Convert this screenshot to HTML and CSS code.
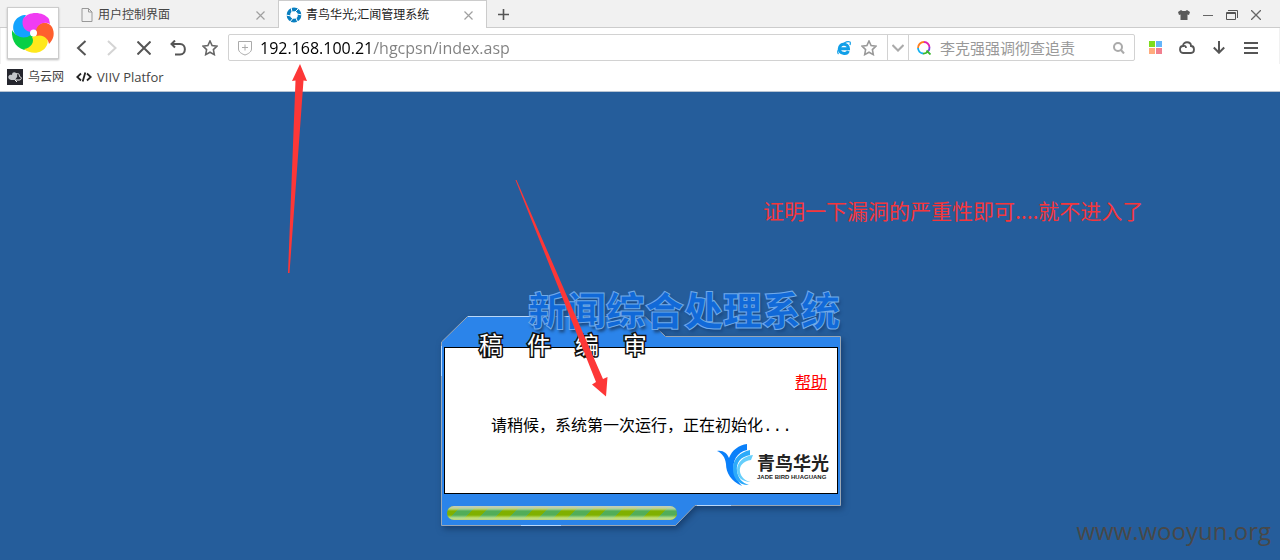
FILE: index.html
```html
<!DOCTYPE html>
<html lang="zh-CN">
<head>
<meta charset="utf-8">
<title>青鸟华光;汇闻管理系统</title>
<link rel="stylesheet" href="styles.css">
</head>
<body>
<header class="browser">
  <button class="brand" aria-label="浏览器菜单">
    <svg width="44" height="44" viewBox="0 0 44 44">
      <g transform="translate(0 1)">
        <path fill="#13a3ff" d="M3 20C0 11 6 3 15 3C11 9 13 16 20 18L20 25C12 29 6 27 3 20Z"/>
        <path fill="#08cf45" d="M1 18C5 25 13 28 20 23C27 27 24 37 16 38C7 38 0 30 1 18Z"/>
        <path fill="#ffe81c" d="M24 23C33 20 39 26 36 33C32 42 20 43 13 37C20 36 24 30 21 25Z"/>
        <path fill="#ff5f2e" d="M24 19C26 10 36 8 41 15C44 21 43 27 38 32C37 26 32 22 25 24Z"/>
        <path fill="#f03cf2" d="M12 7C17 -1 32 -1 38 7L39 12C33 9 26 12 25 19L21 20C14 20 10 14 12 7Z"/>
        <circle cx="22.500" cy="21" r="3.500" fill="#fff"/>
      </g>
    </svg>
  </button>
  <div class="tabbar">
    <div class="tab">
      <svg width="12" height="14" viewBox="0 0 12 14" fill="none" stroke="#999"><path d="M1 .5H7.500L11 4V13.500H1ZM7.500 .5V4H11"/></svg>
      <span class="tab-title">用户控制界面</span>
      <button class="tab-close" aria-label="关闭"><svg width="9" height="9" viewBox="0 0 9 9" stroke="#a0a0a0" stroke-width="1.200"><path d="M.5 .5L8.500 8.500M8.500 .5L.5 8.500"/></svg></button>
    </div>
    <div class="tab active">
      <svg width="16" height="16" viewBox="0 0 16 16" fill="none"><circle cx="8" cy="8" r="5.600" stroke="#0a7fc0" stroke-width="3.600"/><path stroke="#fff" stroke-width="1" d="M5 0L6 5M13 1L9 5M16 8L11 7M12 16L10 11M4 15L7 11M0 8L5 9"/></svg>
      <span class="tab-title">青鸟华光;汇闻管理系统</span>
      <button class="tab-close" aria-label="关闭"><svg width="9" height="9" viewBox="0 0 9 9" stroke="#a0a0a0" stroke-width="1.200"><path d="M.5 .5L8.500 8.500M8.500 .5L.5 8.500"/></svg></button>
    </div>
    <button class="new-tab" aria-label="新标签页"><svg width="11" height="11" viewBox="0 0 11 11" stroke="#555" stroke-width="1.600"><path d="M5.500 0V11M0 5.500H11"/></svg></button>
    <div class="window-controls">
      <button aria-label="皮肤"><svg width="12" height="10" viewBox="0 0 12 10" fill="#5a5a5a"><path d="M3 0L4.500 1H7.500L9 0L12 2L11 5L9.500 4.500V10H2.500V4.500L1 5L0 2Z"/></svg></button>
      <button aria-label="最小化"><svg width="10" height="10" viewBox="0 0 10 10" stroke="#666"><path d="M0 5.500H10"/></svg></button>
      <button aria-label="还原"><svg width="12" height="10" viewBox="0 0 12 10" fill="none" stroke="#555"><path d="M.5 2.500H9.500V9.500H.5ZM.5 3.500H9.500M2 .5H11.500V8"/></svg></button>
      <button aria-label="关闭窗口"><svg width="10" height="10" viewBox="0 0 10 10" stroke="#666" stroke-width="1.300"><path d="M0 0L10 10M10 0L0 10"/></svg></button>
    </div>
  </div>
  <div class="toolbar">
    <button class="nav narrow" aria-label="后退"><svg width="16" height="16" viewBox="0 0 16 16" fill="none" stroke="#555" stroke-width="2"><path d="M11.500 1L4 8L11.500 15"/></svg></button>
    <button class="nav narrow" aria-label="前进"><svg width="16" height="16" viewBox="0 0 16 16" fill="none" stroke="#d4d4d4" stroke-width="2"><path d="M4 1L11.500 8L4 15"/></svg></button>
    <button class="nav" aria-label="停止"><svg width="14" height="14" viewBox="0 0 14 14" stroke="#555" stroke-width="2"><path d="M.5 .5L13.500 13.500M13.500 .5L.5 13.500"/></svg></button>
    <button class="nav" aria-label="撤销"><svg width="16" height="16" viewBox="0 0 16 16" fill="none" stroke="#555" stroke-width="2"><path d="M5 .5L1.500 4L5 7.500M1.500 4H10C16.500 4 16.500 14.500 10 14.500H5"/></svg></button>
    <button class="nav narrow" aria-label="收藏"><svg width="16" height="16" viewBox="0 0 16 16" fill="none" stroke="#666" stroke-width="1.600"><path d="M8 1L10.100 5.600L15 6.200L11.400 9.600L12.300 14.600L8 12.200L3.700 14.600L4.600 9.600L1 6.200L5.900 5.600Z"/></svg></button>
    <div class="omnibox">
      <svg width="14" height="16" viewBox="0 0 14 16" fill="none" stroke="#aaa"><path d="M.5 1.500H13.500V9C13.500 12 10 14 7 15C4 14 .5 12 .5 9ZM7 4.500V10.500M4 7.500H10"/></svg>
      <input class="url" type="text" aria-label="地址栏" value="192.168.100.21/hgcpsn/index.asp">
      <button class="box-btn" aria-label="兼容模式"><svg width="14" height="14" viewBox="0 0 14 14" fill="none"><path stroke="#109fe8" stroke-width="3" d="M3.500 7.700H11.500C11.300 2 2.800 1.500 2.300 7.500C2.300 13.300 10 13.800 11.300 10"/><path stroke="#109fe8" stroke-width="1.200" d="M1.500 13C-1.500 10 7 -1 13 1C13.500 1.500 13.300 3 13 4"/></svg></button>
      <button class="box-btn" aria-label="收藏此页"><svg width="16" height="16" viewBox="0 0 16 16" fill="none" stroke="#999" stroke-width="1.600"><path d="M8 1L10.100 5.600L15 6.200L11.400 9.600L12.300 14.600L8 12.200L3.700 14.600L4.600 9.600L1 6.200L5.900 5.600Z"/></svg></button>
      <button class="drop" aria-label="展开"><svg width="12" height="8" viewBox="0 0 12 8" fill="none" stroke="#aaa" stroke-width="2"><path d="M.5 1L6 6.500L11.500 1"/></svg></button>
      <div class="search">
        <svg width="14" height="14" viewBox="0 0 14 14" fill="none" stroke-width="1.800"><path stroke="#e020b0" d="M7 1A6 6 0 0 1 12.500 6"/><path stroke="#8040e0" d="M12.500 6A6 6 0 0 1 11 10.500"/><path stroke="#38b830" d="M11 10.500A6 6 0 0 1 6 12.500M9.500 9.500L13.500 13.500"/><path stroke="#10b0f0" d="M6 12.500A6 6 0 0 1 1 7"/><path stroke="#ff8020" d="M1 7A6 6 0 0 1 7 1"/></svg>
        <input class="query" type="text" aria-label="搜索" placeholder="李克强强调彻查追责">
        <button class="find" aria-label="搜索"><svg width="12" height="12" viewBox="0 0 12 12" fill="none" stroke="#aaa" stroke-width="2"><circle cx="5" cy="5" r="4"/><path d="M8 8L11 11.500"/></svg></button>
      </div>
    </div>
    <div class="tools">
      <button aria-label="应用"><svg width="13" height="13" viewBox="0 0 13 13"><path fill="#7ddc1f" d="M0 0H6V6H0Z"/><path fill="#63b5fb" d="M7 0H13V6H7Z"/><path fill="#ffab7c" d="M0 7H6V13H0Z"/><path fill="#f17f8f" d="M7 7H13V13H7Z"/></svg></button>
      <button aria-label="云同步"><svg width="16" height="13" viewBox="0 0 16 13" fill="none" stroke="#555" stroke-width="1.800"><path d="M4 12C0 12 0 5 4 5C4 0 12 0 12 5C16 5 16 12 12 12ZM4 5C5.500 4.500 7 5 7 7"/></svg></button>
      <button aria-label="下载"><svg width="12" height="13" viewBox="0 0 12 13" fill="none" stroke="#555" stroke-width="2"><path d="M6 0V12M.8 6.500L6 11.700L11.200 6.500"/></svg></button>
      <button aria-label="菜单"><svg width="14" height="12" viewBox="0 0 14 12" stroke="#555" stroke-width="2"><path d="M0 1H14M0 6H14M0 11H14"/></svg></button>
    </div>
  </div>
  <nav class="bookmarks" aria-label="书签">
    <a href="#"><svg width="16" height="16" viewBox="0 0 16 16"><path fill="#25262e" d="M0 0H16V16H0Z"/><path fill="#c4c6ca" d="M2 10C0 7 3 5 5 6C5 2 10 3 10 6C11 8 9 9 8 11H4Z"/><path fill="none" stroke="#eee" d="M9 5C12 4 13 6 12 7C15 8 15 11 12 11H8L10 13"/></svg>乌云网</a>
    <a class="latin" href="#"><svg width="16" height="10" viewBox="0 0 16 10" fill="none" stroke="#222" stroke-width="1.800"><path d="M5 1.500L1.200 5L5 8.500M11 1.500L14.800 5L11 8.500M9.300 .5L6.700 9.500"/></svg>VIIV Platfor</a>
  </nav>
</header>

<main class="page">
  <section class="panel">
    <svg class="frame" width="400" height="210" viewBox="0 0 400 210">
      <path fill="#2b84ea" stroke="#9aa7b5" d="M.5 26L26.500 .5H204L224.500 20.500H399.500V189.500H254L234.500 209.500H.5Z"/>
      <path fill="none" stroke="#b9d7f8" d="M27 .5H200M.5 30V60M80 209.500H120M256 189.500H290"/>
    </svg>
    <h1 class="system">新闻综合处理系统</h1>
    <h2 class="module">稿　件　编　审</h2>
    <div class="card">
      <a class="help" href="#">帮助</a>
      <p class="message">请稍候，系统第一次运行，正在初始化...</p>
      <div class="company">
        <svg width="36" height="43" viewBox="0 0 36 43">
          <path fill="#0a80fa" d="M0 7C6 6 10 9 12 14C15 6 22 1 30 0V6C20 8 15 17 17 27C18 33 21 38 25 42C14 37 9 29 9 20C8 13 5 9 0 7Z"/>
          <path fill="#2caafa" d="M33 6V11C23 13 19 19 20 27C21 34 25 39 32 41C20 41 16 33 16 25C16 15 23 8 33 6Z"/>
          <path fill="#65cefb" d="M36 11L34 16C26 17 22 22 23 28C24 33 28 37 34 38C25 38 20 33 20 26C20 18 27 12 36 11Z"/>
        </svg>
        <div class="company-text"><strong>青鸟华光</strong><small>JADE BIRD HUAGUANG</small></div>
      </div>
    </div>
    <progress class="loading" max="100" value="100" aria-label="初始化进度"></progress>
  </section>
</main>

<p class="note">证明一下漏洞的严重性即可....就不进入了</p>
<p class="watermark">www.wooyun.org</p>
<svg class="arrows" width="620" height="410" viewBox="0 0 620 410" fill="#fd3737">
  <path d="M300 64L307 81L303.500 80.500L289.500 273H288L295.500 80.500L292 81Z"/>
  <path d="M515.500 180H516.500L603 379L607.500 377L606 396.500L592 384.500L596 382Z"/>
</svg>
</body>
</html>
```

FILE: styles.css
```css
* { box-sizing: border-box; }

body {
  position: relative;
  display: flex;
  flex-direction: column;
  min-height: 100vh;
  margin: 0;
  background: #255d9b;
  font: 12px/16px "Open Sans", "Noto Sans CJK SC", sans-serif;
  color: #444;
}

button {
  display: flex;
  align-items: center;
  justify-content: center;
  padding: 0;
  border: 0;
  background: none;
}

svg { display: block; flex: none; }
h1, h2, p { margin: 0; }

.browser {
  position: relative;
  background: #fff;
  border-bottom: 1px solid #b8c4d2;
}

.brand {
  position: absolute;
  left: 7px;
  top: 7px;
  width: 52px;
  height: 52px;
  background: #fff;
  border: 1px solid #ccc;
  box-shadow: 0 1px 2px #bbb;
}

.tabbar {
  display: flex;
  height: 28px;
  padding-left: 68px;
  background: #f1f1f1;
  box-shadow: inset 0 -1px #ccc;
}

.tab {
  display: flex;
  align-items: center;
  gap: 5px;
  width: 210px;
  padding: 2px 13px 0;
}

.tab.active {
  gap: 4px;
  width: 209px;
  padding: 1px 13px 0 7px;
  background: #fff;
  border: solid #ccc;
  border-width: 1px 1px 0;
  color: #222;
}

.tab-title { flex: 1; white-space: nowrap; }
.new-tab { width: 32px; }

.window-controls {
  display: flex;
  margin-left: auto;
  padding: 2px 12px 0 0;
}

.window-controls button { width: 24px; }

.toolbar {
  display: flex;
  align-items: center;
  height: 36px;
  padding: 3px 12px 0 66px;
  border: solid #f1f1f1;
  border-width: 0 1px;
}

.nav { width: 34px; height: 27px; }
.nav.narrow { width: 30px; }

.omnibox {
  display: flex;
  flex: 1;
  align-items: center;
  height: 27px;
  margin: 0 4px 0 3px;
  padding-left: 9px;
  border: 1px solid #d2d2d2;
  border-radius: 2px;
}

input {
  flex: 1;
  min-width: 0;
  padding: 0;
  border: 0;
  outline: 0;
  font: 15px/20px "Open Sans", "Noto Sans CJK SC", sans-serif;
}

/* the host part is black, the path is grey */
.url {
  margin-left: 8px;
  color: transparent;
  background: linear-gradient(90deg, #000 113px, #808080 113px);
  background-clip: text;
  -webkit-background-clip: text;
  font-size: 16px;
}

.box-btn { width: 25px; height: 25px; }

.drop {
  width: 22px;
  height: 25px;
  margin-left: 6px;
  border: solid #d2d2d2;
  border-width: 0 1px;
}

.search {
  display: flex;
  align-items: center;
  width: 225px;
  padding: 0 9px 0 8px;
}

.query { margin-left: 9px; background: none; }
.query::placeholder { color: #999; opacity: 1; }

.tools { display: flex; }
.tools button { width: 32px; height: 24px; }

.bookmarks {
  display: flex;
  gap: 12px;
  height: 27px;
  padding: 0 7px 2px;
}

.bookmarks a {
  display: flex;
  align-items: center;
  gap: 5px;
  color: #444;
  text-decoration: none;
}

.bookmarks .latin { font-size: 13px; }

.page { padding-top: 224px; }

.panel {
  position: relative;
  width: 400px;
  margin: 0 auto;
  padding: 31px 3px 6px;
  left: 1px;
}

.frame {
  position: absolute;
  left: 0;
  top: 0;
  overflow: visible;
  filter: drop-shadow(2px 3px 3px #173f70);
}

.system {
  position: absolute;
  right: 1px;
  top: -28px;
  font: 900 39px/40px "Noto Sans CJK SC", sans-serif;
  color: #1169d8;
  -webkit-text-stroke: 1px #70a9e8;
  text-shadow: 2px 3px 3px #1c4c86;
  white-space: nowrap;
}

.module {
  position: absolute;
  z-index: 1;
  left: 38px;
  top: 14px;
  font: 400 24px/28px "Noto Sans CJK SC", sans-serif;
  color: #fff;
  -webkit-text-stroke: 3px #111;
  paint-order: stroke fill;
  white-space: nowrap;
}

.card {
  position: relative;
  z-index: 0;
  display: flex;
  flex-direction: column;
  height: 147px;
  padding: 23px 10px 6px;
  background: #fff;
  border: 1px solid #000;
}

.help {
  align-self: flex-end;
  font: 16px/20px "Noto Sans CJK SC", sans-serif;
  color: #f00;
}

.message {
  padding: 25px 0 0 36px;
  font: 16px/22px "Liberation Mono", "Noto Sans CJK SC", monospace;
  color: #000;
}

.company {
  display: flex;
  align-items: center;
  align-self: flex-end;
  gap: 4px;
  margin-top: auto;
}

.company-text {
  display: flex;
  flex-direction: column;
  width: 70px;
  padding-top: 3px;
  color: #222;
  white-space: nowrap;
}

.company-text strong { font: 700 18px/20px "Noto Sans CJK SC", sans-serif; }
.company-text small { font: bold 6px/10px "Liberation Sans", sans-serif; }

/* stacked above the frame drawing */
.loading {
  position: relative;
  display: block;
  width: 230px;
  height: 14px;
  margin: 12px 0 0 3px;
  border: 0;
  border-radius: 7px;
  overflow: hidden;
  appearance: none;
  -webkit-appearance: none;
}

.loading::-webkit-progress-bar { background: #b6cf8a; }

.loading::-webkit-progress-value {
  background:
    linear-gradient(#c2cdb4 1px, #d8e6c0a0 3px, #ffffff00 5px, #ffffff00 9px, #d8f0a0c0 12px, #b8d080),
    repeating-linear-gradient(135deg, #80b000 0 10px, #52ad58 10px 21px);
}

.note {
  position: absolute;
  left: 763px;
  top: 196px;
  font: 400 21px/28px "Noto Sans CJK SC", sans-serif;
  color: #f5363c;
  white-space: nowrap;
}

.watermark {
  position: absolute;
  right: 9px;
  bottom: 12px;
  font: 24px/34px "Open Sans", sans-serif;
  color: #484848;
}

.arrows {
  position: absolute;
  left: 0;
  top: 0;
  z-index: 2;
  pointer-events: none;
}
```
